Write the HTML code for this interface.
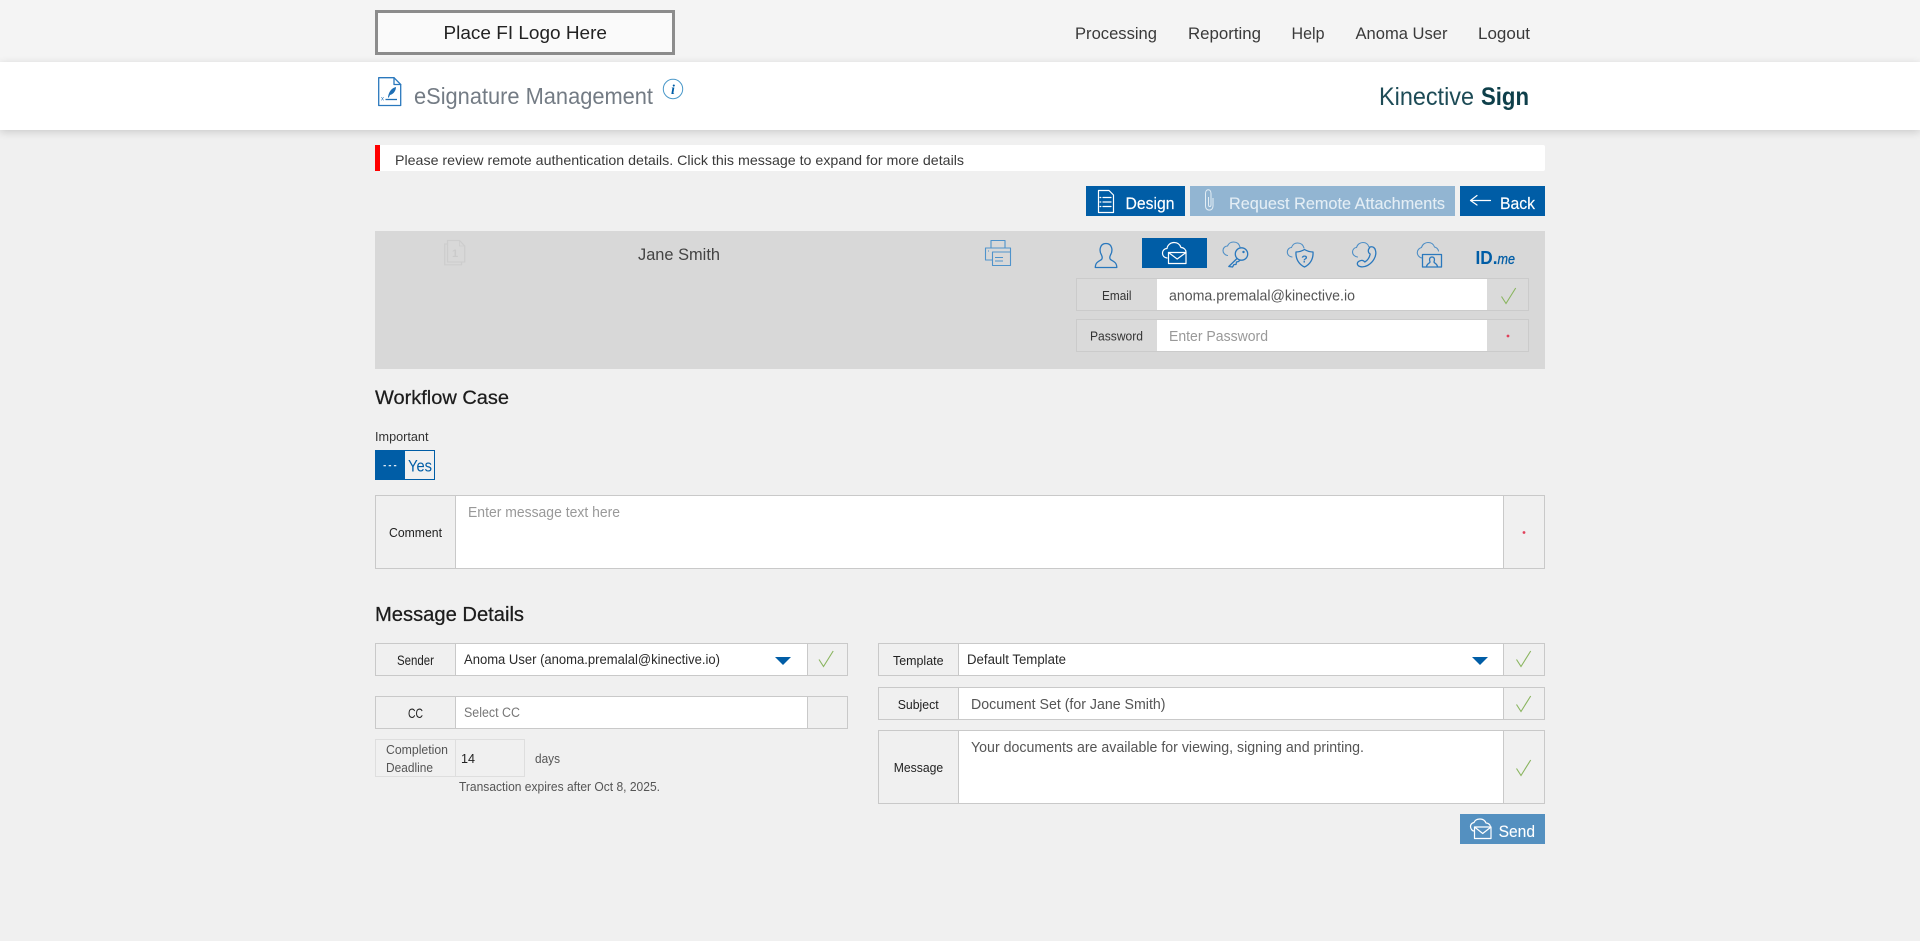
<!DOCTYPE html>
<html lang="en">
<head>
<meta charset="utf-8">
<title>eSignature Management</title>
<style>
html,body{margin:0;padding:0;width:1920px;height:941px;overflow:hidden;background:#f0f0f0}
.b{position:absolute;box-sizing:border-box}
.cell{border:1px solid #c9c9c9;background:#f0f0f0}
.p .cell{background:#dadada;border-color:#cbcbcb}
.w{background:#fff}
svg{position:absolute;left:0;top:0}
text{font-family:"Liberation Sans",Arial,sans-serif;white-space:pre}
.ic{fill:#d8d8d8;stroke:#2a78bd;stroke-width:1.3;stroke-linecap:round;stroke-linejoin:round}
.nf{fill:none}
.cl{fill:none;stroke:#4f8fc6;stroke-width:1.1;stroke-linecap:round}
.pr{fill:none;stroke:#4f93cb;stroke-width:1.1;stroke-linejoin:round}
.ck{fill:none;stroke:#8ab55f;stroke-width:1.1}
.wi{fill:none;stroke:#fff;stroke-width:1.2;stroke-linejoin:round;stroke-linecap:round}
</style>
</head>
<body>
<div class="b" style="left:0;top:0;width:1920px;height:62px;background:#f4f4f4"></div>
<div class="b" style="left:0;top:62px;width:1920px;height:68px;background:#fff;box-shadow:0 2px 8px rgba(0,0,0,.16)"></div>
<div class="b" style="left:375px;top:10px;width:300px;height:45px;border:3px solid #8c8c8c;background:#fafafa"></div>

<div class="b w" style="left:375px;top:145px;width:1170px;height:26px;border-radius:2px"></div>
<div class="b" style="left:375px;top:145px;width:5px;height:26px;background:#f00"></div>

<div class="b" style="left:1086px;top:186px;width:99px;height:30px;background:#005da6"></div>
<div class="b" style="left:1190px;top:186px;width:265px;height:30px;background:#92b5d2"></div>
<div class="b" style="left:1460px;top:186px;width:85px;height:30px;background:#005da6"></div>

<div class="p">
<div class="b" style="left:375px;top:231px;width:1170px;height:138px;background:#d8d8d8"></div>
<div class="b" style="left:1142px;top:238px;width:65px;height:30px;background:#005da6"></div>
<div class="b cell" style="left:1076px;top:278px;width:453px;height:33px"></div>
<div class="b w" style="left:1157px;top:279px;width:330px;height:31px"></div>
<div class="b cell" style="left:1076px;top:319px;width:453px;height:33px"></div>
<div class="b w" style="left:1157px;top:320px;width:330px;height:31px"></div>
</div>

<div class="b" style="left:375px;top:450px;width:60px;height:30px;border:1px solid #005da6"></div>
<div class="b" style="left:375px;top:450px;width:30px;height:30px;background:#005da6"></div>

<div class="b cell" style="left:375px;top:495px;width:1170px;height:74px"></div>
<div class="b w" style="left:455px;top:496px;width:1049px;height:72px;border-left:1px solid #c9c9c9;border-right:1px solid #c9c9c9"></div>

<div class="b cell" style="left:375px;top:643px;width:473px;height:33px"></div>
<div class="b w" style="left:455px;top:644px;width:353px;height:31px;border-left:1px solid #c9c9c9;border-right:1px solid #c9c9c9"></div>
<div class="b cell" style="left:375px;top:696px;width:473px;height:33px"></div>
<div class="b w" style="left:455px;top:697px;width:353px;height:31px;border-left:1px solid #c9c9c9;border-right:1px solid #c9c9c9"></div>
<div class="b" style="left:375px;top:739px;width:150px;height:38px;border:1px solid #dedede"></div>
<div class="b" style="left:455px;top:739px;width:1px;height:38px;background:#dedede"></div>

<div class="b cell" style="left:878px;top:643px;width:667px;height:33px"></div>
<div class="b w" style="left:958px;top:644px;width:546px;height:31px;border-left:1px solid #c9c9c9;border-right:1px solid #c9c9c9"></div>
<div class="b cell" style="left:878px;top:687px;width:667px;height:33px"></div>
<div class="b w" style="left:958px;top:688px;width:546px;height:31px;border-left:1px solid #c9c9c9;border-right:1px solid #c9c9c9"></div>
<div class="b cell" style="left:878px;top:730px;width:667px;height:74px"></div>
<div class="b w" style="left:958px;top:731px;width:546px;height:72px;border-left:1px solid #c9c9c9;border-right:1px solid #c9c9c9"></div>
<div class="b" style="left:1460px;top:814px;width:85px;height:30px;background:#5490c0"></div>

<svg width="1920" height="941" viewBox="0 0 1920 941" xmlns="http://www.w3.org/2000/svg">
<defs>
<path id="chk" d="M0 8.5L4.5 15.5L14.2 0"/>
</defs>

<!-- top bar text -->
<text x="443.5" y="39" font-size="18.5" fill="#222" textLength="163.5" lengthAdjust="spacingAndGlyphs">Place FI Logo Here</text>
<g font-size="16.5" fill="#3a3a3a">
<text x="1075" y="39" textLength="82" lengthAdjust="spacingAndGlyphs">Processing</text>
<text x="1188" y="39" textLength="73" lengthAdjust="spacingAndGlyphs">Reporting</text>
<text x="1291.5" y="39" textLength="33" lengthAdjust="spacingAndGlyphs">Help</text>
<text x="1355.5" y="39" textLength="92" lengthAdjust="spacingAndGlyphs">Anoma User</text>
<text x="1478" y="39" textLength="52" lengthAdjust="spacingAndGlyphs">Logout</text>
</g>

<!-- title band -->
<path class="ic nf" d="M378.7 77.7H394L400.7 84.5V105.5H378.7Z"/>
<path class="ic nf" d="M394 77.7V84.5H400.7" stroke-width="1"/>
<path d="M388 97C389 91 392 88 396 87C396 90 394 94 390 95L388.5 98Z" fill="#1f6fb5"/>
<path d="M385.5 99.5H397" stroke="#1f6fb5" stroke-width="1.3"/>
<text x="381" y="100.5" font-size="6" fill="#1f6fb5">x</text>
<text x="414" y="104" font-size="23" fill="#737b84" textLength="239" lengthAdjust="spacingAndGlyphs">eSignature Management</text>
<circle cx="673" cy="89" r="9.7" fill="#fff" stroke="#4a98c9" stroke-width="1"/>
<text x="673" y="94" font-size="14" font-weight="bold" font-style="italic" fill="#005da6" text-anchor="middle" style="font-family:'Liberation Serif',serif">i</text>
<text x="1379" y="105" font-size="25" fill="#1d4b56" textLength="95" lengthAdjust="spacingAndGlyphs">Kinective</text>
<text x="1481" y="105" font-size="25" font-weight="bold" fill="#0e3f4a" textLength="48" lengthAdjust="spacingAndGlyphs">Sign</text>

<!-- alert -->
<text x="395" y="165" font-size="14" fill="#3a3a3a" textLength="569" lengthAdjust="spacingAndGlyphs">Please review remote authentication details. Click this message to expand for more details</text>

<!-- action buttons -->
<path class="wi" d="M1098.5 190.5H1109L1113.5 195V212.5H1098.5Z" stroke-width="1"/>
<path class="wi" d="M1103 197.5H1111M1103 202H1111M1103 206.5H1111" stroke-width="1"/>
<path class="wi" d="M1100 197.5h.8M1100 202h.8M1100 206.5h.8" stroke-width="1.3"/>
<text x="1125.5" y="209" font-size="16.5" fill="#fff" stroke="#fff" stroke-width=".15" textLength="49" lengthAdjust="spacingAndGlyphs">Design</text>
<path d="M1213 198V206C1213 211.5 1205.5 211.5 1205.5 206V193.5C1205.5 188.5 1211 188.5 1211 193.5V205C1211 207 1208.5 207 1208.5 205V197" fill="none" stroke="#e4eef5" stroke-width="1"/>
<text x="1229" y="209" font-size="16.5" fill="#e4eef5" stroke="#e4eef5" stroke-width=".1" textLength="216" lengthAdjust="spacingAndGlyphs">Request Remote Attachments</text>
<path class="wi" d="M1490.5 200.5H1471M1477 195.5L1470.5 200.5L1477 205" stroke-width="1.1"/>
<text x="1500" y="209" font-size="16.5" fill="#fff" stroke="#fff" stroke-width=".15" textLength="35" lengthAdjust="spacingAndGlyphs">Back</text>

<!-- panel -->
<g fill="none" stroke="#cdcdcd" stroke-width="1.2">
<path d="M447.5 244H444.7V264.8H461.5V262"/>
<path d="M447.5 240.5H459.5L464.7 246V262H447.5Z"/>
<path d="M459.5 240.5V246H464.7" stroke-width=".8"/>
</g>
<text x="452" y="257" font-size="11" font-weight="bold" fill="#cbcbcb">1</text>
<text x="638" y="260" font-size="16.5" fill="#444" textLength="82" lengthAdjust="spacingAndGlyphs">Jane Smith</text>

<!-- printer -->
<path class="pr" d="M991 248V240.5H1005V248"/>
<path class="pr" d="M992.5 260H985.5V248H1010.5V252"/>
<path class="pr" d="M992.5 252H1010.5V265.5H992.5Z"/>
<path class="pr" d="M995 257.5H1003M995 261H1003"/>
<path class="pr" d="M988 251h1"/>

<!-- person -->
<path class="ic nf" d="M1101.5 255C1099 251 1099.5 243.5 1106 243.5C1112.5 243.5 1113 251 1110.5 255C1109.8 256.5 1109.5 258.5 1110.5 259.5C1112 261 1116.8 261.5 1116.8 267.5H1095.3C1095.3 261.5 1100 261 1101.5 259.5C1102.5 258.5 1102.2 256.5 1101.5 255Z"/>

<!-- cloud envelope (active) -->
<path class="wi" d="M1167 258C1164 257.5 1162.5 255.5 1162.5 253C1162.5 250.5 1164.5 248.5 1167 248.5C1167.5 245 1170.5 242.5 1174 242.5C1177.5 242.5 1180 244.5 1181 247.5C1184 247.5 1186 250 1186 252" stroke-width="1"/>
<path class="wi" style="fill:#005da6" d="M1168.5 252.5H1186V263.5H1168.5Z"/>
<path class="wi" d="M1168.5 252.5L1177.2 259L1186 252.5"/>

<!-- cloud key -->
<path class="cl" d="M1227.5 255.5C1224.5 255 1223 252.5 1223 250.5C1223 248 1225 246 1227.5 246C1228.5 243.5 1231 242 1233.5 242C1236.5 242 1239 243.5 1240 247"/>
<path class="ic" d="M1237 258.5L1228.8 266.5L1232.5 267L1234 264.5L1236 264.5L1236.5 262L1238.5 261.5L1240.3 260"/>
<circle class="ic" cx="1241.5" cy="254" r="6.2"/>
<circle cx="1243.5" cy="252" r="1.2" fill="#2a78bd"/>

<!-- cloud shield -->
<path class="cl" d="M1292 257C1289 256.5 1287.3 254.5 1287.3 252C1287.3 249.5 1289.3 247.5 1291.5 247.5C1292.5 244.5 1295 243 1297.5 243C1300.5 243 1303 244.5 1304 248"/>
<path class="ic" d="M1304.5 249.5C1307 251 1310 252 1313 252C1313.5 259 1310 264.5 1304.5 267C1299 264.5 1295.5 259 1296 252C1299 252 1302 251 1304.5 249.5Z"/>
<text x="1304.5" y="262.5" font-size="10.5" font-weight="bold" fill="#2a78bd" text-anchor="middle">?</text>

<!-- cloud phone -->
<path class="cl" d="M1357.5 257C1354.5 256.5 1352.5 254.5 1352.5 252C1352.5 249.5 1354.5 247.5 1356.5 247.5C1357.5 244 1360.5 242.5 1363 242.5C1366 242.5 1368 244 1369 247"/>
<path class="ic nf" d="M1370 247C1373 246 1375 248 1375.5 250.5C1377 256 1373 262.5 1367.5 265.5C1363 267.8 1358.5 267 1357.5 264.5C1356.8 262.5 1358.5 261 1361 260.5C1362.8 260 1364 261 1364.8 262C1367.5 260.5 1369.5 257.5 1370.2 254C1368.5 253 1368 251.5 1368.5 249.5Z"/>

<!-- cloud video -->
<path class="cl" d="M1422 258C1419 257.5 1417.3 255 1417.3 252.5C1417.3 250 1419.3 248 1421.5 247.5C1422.5 244 1425.5 242.5 1428 242.5C1431 242.5 1433.5 244 1434.5 247C1436.5 247.5 1438 249 1438.5 251"/>
<path class="ic" stroke-width="1.4" d="M1422.5 254.5H1441.5V267H1422.5Z"/>
<path class="ic nf" stroke-width="1" d="M1430 262C1429 259.5 1429.5 257 1432 257C1434.5 257 1435 259.5 1434 262C1434.5 263.5 1437 263.5 1437.5 266.5M1430 262C1429.5 263.5 1427 263.5 1426.5 266.5"/>

<!-- ID.me -->
<text x="1475.5" y="264" font-size="18" font-weight="bold" fill="#005da6" textLength="22" lengthAdjust="spacingAndGlyphs">ID.</text>
<text x="1497.5" y="264" font-size="15" font-style="italic" fill="#005da6" stroke="#005da6" stroke-width=".3" textLength="17.5" lengthAdjust="spacingAndGlyphs">me</text>

<!-- panel fields -->
<text x="1102" y="300" font-size="13" fill="#333" textLength="29.5" lengthAdjust="spacingAndGlyphs">Email</text>
<text x="1169" y="300.5" font-size="14.5" fill="#555" textLength="186" lengthAdjust="spacingAndGlyphs">anoma.premalal@kinective.io</text>
<use href="#chk" class="ck" x="1501.5" y="288"/>
<text x="1090" y="340.5" font-size="13" fill="#333" textLength="53" lengthAdjust="spacingAndGlyphs">Password</text>
<text x="1169" y="341" font-size="14.5" fill="#999" textLength="99" lengthAdjust="spacingAndGlyphs">Enter Password</text>
<circle cx="1508" cy="336" r="1.4" fill="#e0405a"/>

<!-- Workflow -->
<text x="375" y="404" font-size="19.5" fill="#1c1c1c" stroke="#1c1c1c" stroke-width=".25" textLength="134" lengthAdjust="spacingAndGlyphs">Workflow Case</text>
<text x="375" y="441" font-size="13" fill="#333" textLength="53.5" lengthAdjust="spacingAndGlyphs">Important</text>
<path d="M383.5 465.7h2.4M388.7 465.7h2.4M393.9 465.7h2.4" stroke="#fff" stroke-width="1.1"/>
<text x="408" y="471.5" font-size="17" fill="#005da6" textLength="24" lengthAdjust="spacingAndGlyphs">Yes</text>
<text x="389" y="537" font-size="13" fill="#222" textLength="53" lengthAdjust="spacingAndGlyphs">Comment</text>
<text x="468" y="517" font-size="14.5" fill="#999" textLength="152" lengthAdjust="spacingAndGlyphs">Enter message text here</text>
<circle cx="1524" cy="532.5" r="1.4" fill="#e0405a"/>

<!-- Message Details -->
<text x="375" y="621" font-size="20" fill="#1c1c1c" stroke="#1c1c1c" stroke-width=".25" textLength="149" lengthAdjust="spacingAndGlyphs">Message Details</text>
<text x="397" y="665" font-size="13.5" fill="#222" textLength="37" lengthAdjust="spacingAndGlyphs">Sender</text>
<text x="464" y="664" font-size="14" fill="#2a2a2a" textLength="256" lengthAdjust="spacingAndGlyphs">Anoma User (anoma.premalal@kinective.io)</text>
<path d="M775 657H791L783 665Z" fill="#005da6"/>
<use href="#chk" class="ck" x="819" y="651"/>
<text x="408" y="718" font-size="14" fill="#222" textLength="15" lengthAdjust="spacingAndGlyphs">CC</text>
<text x="464" y="717" font-size="13.5" fill="#777" textLength="56" lengthAdjust="spacingAndGlyphs">Select CC</text>
<text x="386" y="754" font-size="13" fill="#555" textLength="62" lengthAdjust="spacingAndGlyphs">Completion</text>
<text x="386" y="772" font-size="13" fill="#555" textLength="47" lengthAdjust="spacingAndGlyphs">Deadline</text>
<text x="461" y="763" font-size="13" fill="#222" textLength="14" lengthAdjust="spacingAndGlyphs">14</text>
<text x="535" y="763" font-size="13" fill="#555" textLength="25" lengthAdjust="spacingAndGlyphs">days</text>
<text x="459" y="791" font-size="12.5" fill="#555" textLength="201" lengthAdjust="spacingAndGlyphs">Transaction expires after Oct 8, 2025.</text>

<!-- right column -->
<text x="893" y="665" font-size="13" fill="#222" textLength="50.5" lengthAdjust="spacingAndGlyphs">Template</text>
<text x="967" y="664" font-size="13.5" fill="#2a2a2a" textLength="99" lengthAdjust="spacingAndGlyphs">Default Template</text>
<path d="M1472 657H1488L1480 665Z" fill="#005da6"/>
<use href="#chk" class="ck" x="1516.5" y="651"/>
<text x="897.7" y="709" font-size="13" fill="#222" textLength="41" lengthAdjust="spacingAndGlyphs">Subject</text>
<text x="971" y="709" font-size="14.5" fill="#555" textLength="194.5" lengthAdjust="spacingAndGlyphs">Document Set (for Jane Smith)</text>
<use href="#chk" class="ck" x="1516.5" y="696"/>
<text x="893.7" y="772" font-size="13" fill="#222" textLength="49.5" lengthAdjust="spacingAndGlyphs">Message</text>
<text x="971" y="752" font-size="14.5" fill="#555" textLength="393" lengthAdjust="spacingAndGlyphs">Your documents are available for viewing, signing and printing.</text>
<use href="#chk" class="ck" x="1516.5" y="760"/>

<!-- send -->
<path class="wi" d="M1474 831C1472 831 1470.5 828.5 1470.5 826.5C1470.5 824.5 1472 823 1474 822.5C1475 820 1477.5 819 1480 819C1483 819 1485 820.5 1486 823C1488.5 823 1490.5 825 1490.5 827" stroke-width="1"/>
<path class="wi" style="fill:#5490c0" d="M1474.5 827H1491V838.5H1474.5Z"/>
<path class="wi" d="M1474.5 827L1482.7 833.5L1491 827"/>
<text x="1498.6" y="837" font-size="16.5" fill="#fff" stroke="#fff" stroke-width=".1" textLength="36.4" lengthAdjust="spacingAndGlyphs">Send</text>
</svg>
</body>
</html>
